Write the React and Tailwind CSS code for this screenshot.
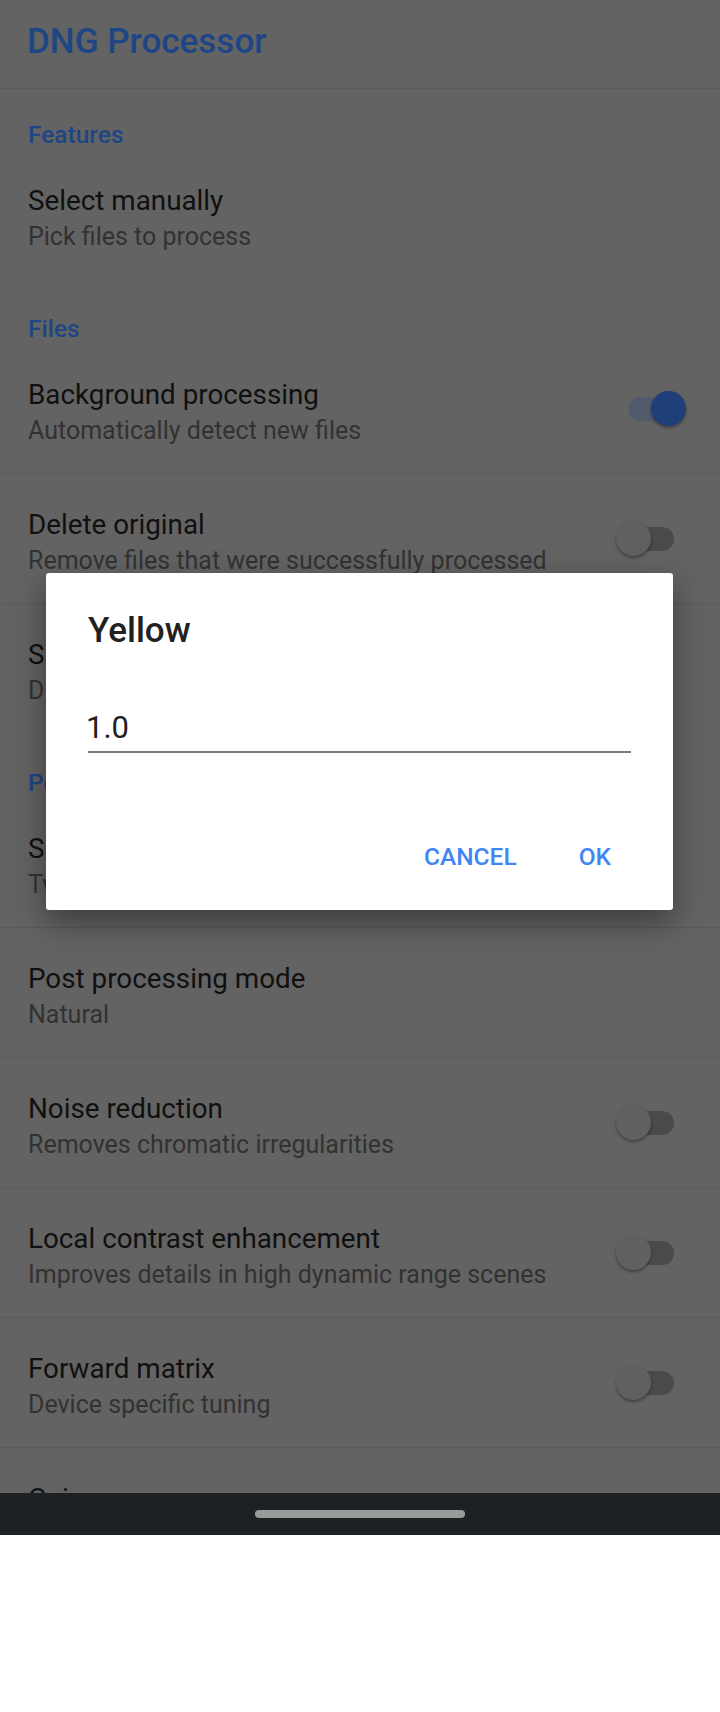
import React from "react";

const font = { fontFamily: "Roboto, 'Noto Sans', sans-serif" };

function Switch({ on }) {
  return (
    <div className="relative w-[70px] h-[35px] shrink-0">
      <div
        className={
          "absolute left-[12px] top-[6px] w-[46px] h-[24px] rounded-full " +
          (on ? "bg-[#525b6b]" : "bg-[#4a4a4a]")
        }
      />
      <div
        className={
          "absolute top-0 w-[35px] h-[35px] rounded-full shadow-[0_2px_3px_rgba(0,0,0,0.35)] " +
          (on ? "left-[35px] bg-[#1e3f78]" : "left-0 bg-[#606060]")
        }
      />
    </div>
  );
}

function Header({ children, h, pt }) {
  return (
    <div className={"pl-[28px] " + h + " " + pt}>
      <div className="text-[24.5px] leading-[30px] font-medium text-[#1e4585]">{children}</div>
    </div>
  );
}

function Row({ title, sub, sw, divider }) {
  return (
    <div
      className={
        "flex items-center pl-[28px] pr-[34px] h-[130px] " +
        (divider ? "border-b border-[#5a5a5a]" : "pb-[1px]")
      }
    >
      <div className="flex-1 h-[129px] pt-[34px]">
        <div className="text-[27.8px] leading-[34px] text-[#101010] whitespace-nowrap">{title}</div>
        <div className="mt-[4px] text-[25px] leading-[30px] text-[#323232] whitespace-nowrap">{sub}</div>
      </div>
      {sw !== undefined && <Switch on={sw} />}
    </div>
  );
}

export default function App() {
  return (
    <div className="w-[720px] h-[1712px] bg-white flex flex-col" style={font}>
      <div className="relative h-[1493px] bg-[#636363] overflow-hidden flex flex-col shrink-0">
        <div className="h-[89px] border-b border-[#5a5a5a] pl-[27px] pt-[22px] shrink-0">
          <div className="text-[35px] leading-[40px] font-medium text-[#1e4585]">DNG Processor</div>
        </div>
        <Header h="h-[62px]" pt="pt-[31px]">Features</Header>
        <Row title="Select manually" sub="Pick files to process" />
        <Header h="h-[65px]" pt="pt-[34px]">Files</Header>
        <Row title="Background processing" sub="Automatically detect new files" sw={true} divider />
        <Row title="Delete original" sub="Remove files that were successfully processed" sw={false} divider />
        <Row title="Save location" sub="DCIM/Processed" />
        <Header h="h-[66px]" pt="pt-[34px]">Post processing</Header>
        <Row title="Saturation map" sub="Tweak saturation per color" divider />
        <Row title="Post processing mode" sub="Natural" divider />
        <Row title="Noise reduction" sub="Removes chromatic irregularities" sw={false} divider />
        <Row title="Local contrast enhancement" sub="Improves details in high dynamic range scenes" sw={false} divider />
        <Row title="Forward matrix" sub="Device specific tuning" sw={false} divider />
        <Row title="Gain map" sub="Lens shading correction" sw={false} divider />

        <div className="absolute left-[46px] top-[573px] w-[627px] h-[337px] bg-white rounded-[3px] shadow-[0_12px_32px_rgba(0,0,0,0.4)] flex flex-col">
          <div className="pl-[42px] pt-[38px] text-[35px] leading-[40px] font-medium text-[#212121]">Yellow</div>
          <div className="mx-[42px] mt-[58px]">
            <div className="text-[31px] leading-[37px] text-[#212121] -ml-[2px]">1.0</div>
            <div className="mt-[5px] h-[2px] bg-[#7a7a7a]" />
          </div>
          <div className="mt-auto pb-[38px] pr-[62px] flex justify-end gap-[62px]">
            <div className="text-[24.5px] leading-[30px] font-medium text-[#4285f4]">CANCEL</div>
            <div className="text-[24.5px] leading-[30px] font-medium text-[#4285f4]">OK</div>
          </div>
        </div>
      </div>
      <div className="h-[42px] bg-[#1e2123] flex items-center justify-center shrink-0">
        <div className="w-[210px] h-[8px] rounded-full bg-[#999b9a]" />
      </div>
      <div className="flex-1 bg-white" />
    </div>
  );
}
